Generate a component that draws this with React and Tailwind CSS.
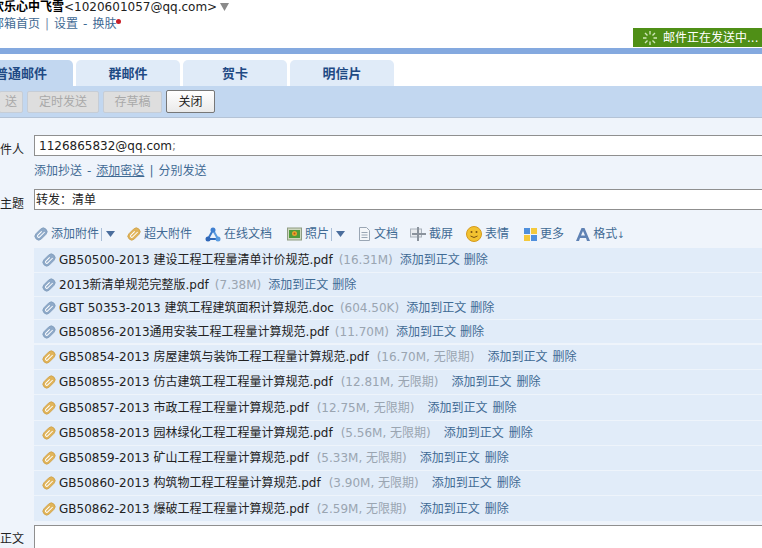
import React from "react";

const FONT = { fontFamily: '"DejaVu Sans", "Noto Sans CJK SC", sans-serif' };

const normales = [
  ["GB50500-2013 建设工程工程量清单计价规范.pdf", "(16.31M)", "h-[25px]"],
  ["2013新清单规范完整版.pdf", "(7.38M)", "h-[24px]"],
  ["GBT 50353-2013 建筑工程建筑面积计算规范.doc", "(604.50K)", "h-[23px]"],
  ["GB50856-2013通用安装工程工程量计算规范.pdf", "(11.70M)", "h-[24px]"],
];

const grandes = [
  ["GB50854-2013 房屋建筑与装饰工程工程量计算规范.pdf", "(16.70M, 无限期)", "h-[25px]"],
  ["GB50855-2013 仿古建筑工程工程量计算规范.pdf", "(12.81M, 无限期)", "h-[25px]"],
  ["GB50857-2013 市政工程工程量计算规范.pdf", "(12.75M, 无限期)", "h-[26px]"],
  ["GB50858-2013 园林绿化工程工程量计算规范.pdf", "(5.56M, 无限期)", "h-[25px]"],
  ["GB50859-2013 矿山工程工程量计算规范.pdf", "(5.33M, 无限期)", "h-[25px]"],
  ["GB50860-2013 构筑物工程工程量计算规范.pdf", "(3.90M, 无限期)", "h-[25px]"],
  ["GB50862-2013 爆破工程工程量计算规范.pdf", "(2.59M, 无限期)", "h-[26px]"],
];

function Clip({ color, dark }) {
  return (
    <svg width="14" height="14" viewBox="0 0 14 14" className="shrink-0">
      <g transform="rotate(45 7 7)">
        <rect x="3.2" y="0" width="7.6" height="14" rx="3.8" fill={color} stroke={dark} strokeWidth="0.6" />
        <path d="M8.2 3v7a1.3 1.3 0 0 1-2.6 0V4.6" fill="none" stroke="#fff" strokeWidth="1" />
      </g>
    </svg>
  );
}

function Caret() {
  return (
    <span className="flex items-center ml-[2px]">
      <span className="w-px h-[13px] bg-[#a9bdd6]" />
      <svg width="11" height="6" viewBox="0 0 11 6" className="ml-[3px]">
        <path d="M1 0h9L5.500 6z" fill="#4a6d9c" />
      </svg>
    </span>
  );
}

function Herramienta({ icon, text, caret, className }) {
  return (
    <span className={`flex items-center ${className}`}>
      {icon}
      <span className="ml-[3px]">{text}</span>
      {caret && <Caret />}
    </span>
  );
}

function Fila({ file, size, icon, dark, grande, className }) {
  return (
    <div className={`flex items-center pl-[8px] bg-[#e1ecf9] border-b border-[#eef4fb] whitespace-nowrap ${className}`}>
      <Clip color={icon} dark={dark} />
      <span className="ml-[3px] text-[#222]">{file}</span>
      <span className={`text-[#9aa5b1] ${grande ? "ml-[8px]" : "ml-[6px]"}`}>{size}</span>
      <span className={`text-[#3f6a94] ${grande ? "ml-[13px]" : "ml-[7px]"}`}>添加到正文</span>
      <span className={`text-[#3f6a94] ${grande ? "ml-[5px]" : "ml-[4px]"}`}>删除</span>
    </div>
  );
}

function Tab({ text, active, className }) {
  return (
    <div className={`h-[26px] w-[104px] rounded-t-[5px] flex items-center justify-center font-bold text-[#1f4a84] text-[13px] ${active ? "bg-[#c2d7f0]" : "bg-[#e0ebf8]"} ${className}`}>
      {text}
    </div>
  );
}

function BotonGris({ text, className }) {
  return (
    <div className={`h-[22px] rounded-[2px] border border-[#c6cdd6] bg-[#dedede] text-[#a9a9a9] flex items-center justify-center ${className}`}>
      {text}
    </div>
  );
}

export default function App() {
  return (
    <div className="w-[762px] h-[548px] overflow-hidden bg-white text-[12px] leading-none relative" style={FONT}>
      {/* CABECERA */}
      <div className="h-[48px]">
        <div className="flex items-center h-[13px] -ml-[8px] text-[#222] whitespace-nowrap">
          <span className="font-bold text-black">欢乐心中飞雪</span>
          <span>&lt;1020601057@qq.com&gt;</span>
          <svg width="9" height="9" viewBox="0 0 9 9" className="ml-[3px]"><path d="M0 1h9L4.500 9z" fill="#8a8a8a" /></svg>
        </div>
        <div className="flex items-center h-[14px] mt-[4px] -ml-[8px] text-[#3f6a94] whitespace-nowrap">
          <span>邮箱首页</span>
          <span className="mx-[5px] text-[#7a8fa8]">|</span>
          <span>设置</span>
          <span className="mx-[5px]">-</span>
          <span>换肤</span>
          <span className="w-[5px] h-[5px] rounded-full bg-[#c8202a] -mt-[6px]" />
        </div>
      </div>
      <div className="absolute top-[28px] right-0 w-[129px] h-[19px] bg-[#4f8f16] text-white flex items-center pl-[10px] whitespace-nowrap">
        <svg width="14" height="14" viewBox="0 0 14 14" stroke="#cfe6b8" strokeWidth="1.4">
          <path d="M7 0v3.500M7 10.500V14M0 7h3.500M10.500 7H14M2 2l2.500 2.500M9.500 9.500L12 12M2 12l2.500-2.500M9.500 4.500L12 2" />
        </svg>
        <span className="ml-[6px]">邮件正在发送中...</span>
      </div>

      <div className="h-[6px] bg-[#84a9df]" />

      {/* PESTAÑAS */}
      <div className="flex gap-[3px] mt-[6px] -ml-[31px]">
        <Tab text="普通邮件" active />
        <Tab text="群邮件" />
        <Tab text="贺卡" />
        <Tab text="明信片" />
      </div>

      {/* BOTONES */}
      <div className="h-[32px] bg-[#c2d7f0] border-b border-[#b4c3d6] flex items-center gap-[4px]">
        <BotonGris text="送" className="w-[24px] -ml-[1px]" />
        <BotonGris text="定时发送" className="w-[72px]" />
        <BotonGris text="存草稿" className="w-[59px]" />
        <div className="h-[23px] w-[49px] rounded-[2px] border border-[#777] bg-gradient-to-b from-white to-[#eaeaea] text-[#222] flex items-center justify-center">关闭</div>
      </div>

      {/* FORMULARIO */}
      <div className="bg-[#eff4fb] h-[430px] pt-[17px]">
        <div className="flex items-center -mr-[3px]">
          <span className="w-[34px] shrink-0 pr-[10px] mt-[8px] text-[#222] flex justify-end whitespace-nowrap">件人</span>
          <div className="flex-1 h-[21px] bg-white border border-[#8f8f8f] pl-[4px] flex items-center text-[#222]">
            1126865832@qq.com<span className="text-[#888]">;</span>
          </div>
        </div>
        <div className="ml-[34px] mt-[8px] h-[14px] flex items-center text-[#3f6a94]">
          <span>添加抄送</span>
          <span className="mx-[5px]">-</span>
          <span className="underline">添加密送</span>
          <span className="mx-[5px]">|</span>
          <span>分别发送</span>
        </div>
        <div className="flex items-center mt-[11px] -mr-[3px]">
          <span className="w-[34px] shrink-0 pr-[10px] mt-[8px] text-[#222] flex justify-end whitespace-nowrap">主题</span>
          <div className="flex-1 h-[21px] bg-white border border-[#8f8f8f] pl-[1px] flex items-center text-[#222]">转发：清单</div>
        </div>

        {/* HERRAMIENTAS */}
        <div className="ml-[34px] mt-[17px] h-[14px] flex items-center text-[#3f6a94] whitespace-nowrap">
          <Herramienta icon={<Clip color="#8ea9c8" dark="#7c98b8" />} text="添加附件" caret />
          <Herramienta icon={<Clip color="#e0b45a" dark="#c99a40" />} text="超大附件" className="ml-[11px]" />
          <Herramienta
            className="ml-[13px]"
            text="在线文档"
            icon={
              <svg width="16" height="15" viewBox="0 0 16 15" fill="none" strokeWidth="2">
                <path d="M8 3L3 12" stroke="#3a78c8" />
                <path d="M8 3l5 9" stroke="#5a9be0" />
                <path d="M3 12h10" stroke="#2f67b8" />
                <circle cx="8" cy="3" r="2.500" fill="#3f7fd0" stroke="none" />
                <circle cx="3" cy="12" r="2.500" fill="#2f67b8" stroke="none" />
                <circle cx="13" cy="12" r="2.500" fill="#5a9be0" stroke="none" />
              </svg>
            }
          />
          <Herramienta
            className="ml-[15px]"
            text="照片"
            caret
            icon={
              <svg width="15" height="14" viewBox="0 0 15 14">
                <rect x="0.500" y="1" width="14" height="12" fill="#cfd8c0" stroke="#8f9c82" />
                <rect x="2" y="3" width="11" height="8" fill="#4f9a3a" />
                <circle cx="7.500" cy="6.500" r="2.500" fill="#e9a52c" />
                <circle cx="7.500" cy="6.500" r="1" fill="#b5521e" />
              </svg>
            }
          />
          <Herramienta
            className="ml-[12px]"
            text="文档"
            icon={
              <svg width="13" height="14" viewBox="0 0 13 14" fill="none">
                <path d="M1.500.5h7l3 3v10h-10z" fill="#f4f6f9" stroke="#9aa6b4" />
                <path d="M3.500 5.500h6M3.500 8h6M3.500 10.500h6" stroke="#9aa6b4" />
              </svg>
            }
          />
          <Herramienta
            className="ml-[12px]"
            text="截屏"
            icon={
              <svg width="16" height="14" viewBox="0 0 16 14" fill="none">
                <rect x="0.500" y="2" width="11" height="8" fill="#e8ebef" stroke="#aab2bc" />
                <path d="M8 0v14M2 7h14" stroke="#8b939d" strokeWidth="2" />
              </svg>
            }
          />
          <Herramienta
            className="ml-[13px]"
            text="表情"
            icon={
              <svg width="16" height="16" viewBox="0 0 16 16">
                <circle cx="8" cy="8" r="7.500" fill="#f2c230" stroke="#d59a1e" />
                <circle cx="5.500" cy="6" r="1" fill="#7a5312" />
                <circle cx="10.500" cy="6" r="1" fill="#7a5312" />
                <path d="M4.500 10q3.500 3 7 0" fill="none" stroke="#7a5312" />
              </svg>
            }
          />
          <Herramienta
            className="ml-[15px]"
            text="更多"
            icon={
              <svg width="13" height="13" viewBox="0 0 13 13">
                <rect width="6" height="6" fill="#4f8fdc" />
                <rect x="7" width="6" height="6" fill="#f4c93c" />
                <rect y="7" width="6" height="6" fill="#f4c93c" />
                <rect x="7" y="7" width="6" height="6" fill="#4f8fdc" />
              </svg>
            }
          />
          <Herramienta
            className="ml-[12px]"
            text={<>格式<span className="text-[9px]">↓</span></>}
            icon={
              <svg width="14" height="13" viewBox="0 0 14 13">
                <path d="M5.500 0h3L14 13h-3l-1-3H4l-1 3H0zM5 7.500h4L7 3z" fill="#5f82b4" fillRule="evenodd" />
              </svg>
            }
          />
        </div>

        {/* ADJUNTOS */}
        <div className="ml-[34px] mt-[7px]">
          {normales.map(([file, size, alto]) => (
            <Fila key={file} file={file} size={size} icon="#8ea9c8" dark="#7c98b8" className={alto} />
          ))}
          <div className="h-[1px]" />
          {grandes.map(([file, size, alto]) => (
            <Fila key={file} file={file} size={size} icon="#e0b45a" dark="#c99a40" grande className={alto} />
          ))}
        </div>

        {/* CUERPO */}
        <div className="flex items-start mt-[3px] -mr-[3px]">
          <span className="w-[34px] shrink-0 pr-[10px] pt-[8px] text-[#222] flex justify-end whitespace-nowrap">正文</span>
          <div className="flex-1 h-[40px] bg-white border border-[#8f8f8f]" />
        </div>
      </div>
    </div>
  );
}
